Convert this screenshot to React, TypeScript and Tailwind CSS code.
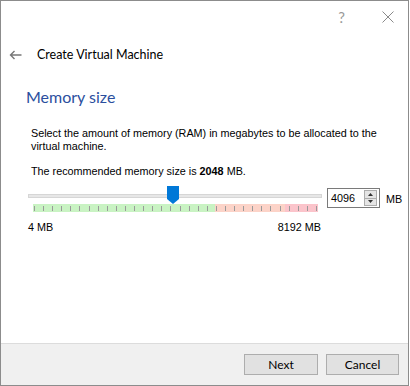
import React from "react";

const ticks = Array.from({ length: 32 }, (_, i) => i);

export default function App() {
  return (
    <div className="w-[410px] h-[386px] bg-white relative overflow-hidden" style={{ fontFamily: '"Liberation Sans", Arial, sans-serif' }}>
      <div className="w-[409px] h-[386px] border border-[#8c8c8c] flex flex-col bg-white">
        {/* title bar */}
        <div className="h-[30px] flex items-center justify-end pr-[14px] text-[#9a9a9a]">
          <span className="text-[15px] mr-[37px] mt-[2px]" style={{ fontFamily: '"Lato", sans-serif' }}>?</span>
          <svg width="12" height="12" viewBox="0 0 12 12" className="mt-[1px]">
            <path d="M0.5 0.5 L11.5 11.5 M11.5 0.5 L0.5 11.5" stroke="#8a8a8a" strokeWidth="1" fill="none" />
          </svg>
        </div>
        {/* header */}
        <div className="h-[46px] flex items-center pl-[8px] pt-[2px]">
          <svg width="13" height="10" viewBox="0 0 13 10">
            <path d="M12.5 5 H1.5 M5.5 1 L1.5 5 L5.5 9" stroke="#777" strokeWidth="1.4" fill="none" />
          </svg>
          <span className="ml-[15px] text-[12.5px] text-black" style={{ fontFamily: '"Lato", sans-serif' }}>Create Virtual Machine</span>
        </div>
        {/* heading */}
        <div className="pl-[25px] pt-[8px] h-[42px]">
          <span className="text-[16px] text-[#2b4f9e]" style={{ fontFamily: '"Lato", sans-serif' }}>Memory size</span>
        </div>
        {/* content */}
        <div className="pl-[30px] pr-[20px] pt-[8px] text-[10.8px] text-black leading-[13px]">
          <p>Select the amount of memory (RAM) in megabytes to be allocated to the virtual machine.</p>
          <p className="mt-[12px]">The recommended memory size is <b>2048</b> MB.</p>
        </div>
        {/* slider row */}
        <div className="flex items-start pl-[27px] mt-[8px]">
          <div className="w-[294px] flex flex-col">
            <div className="relative h-[26px]">
              <div className="absolute left-0 right-0 top-[8px] h-[4px] bg-[#e7e7e7] border border-[#d6d6d6]" />
              <svg className="absolute left-[139px] top-0" width="12" height="19" viewBox="0 0 12 19">
                <path d="M0 0 H12 V13 L6 18 L0 13 Z" fill="#0078d7" />
              </svg>
              <div className="absolute left-[5px] right-[4px] top-[18px] h-[8px] flex">
                <div className="w-[182px] bg-[#c9f3c3]" />
                <div className="w-[70px] bg-[#fcd3c8]" />
                <div className="flex-1 bg-[#fbc4cb]" />
              </div>
              <div className="absolute left-[5px] right-[4px] top-[20px] h-[5px] flex justify-between px-[1px]">
                {ticks.map((i) => (
                  <div key={i} className="w-px h-[5px] bg-[#9a9a9a]" />
                ))}
              </div>
            </div>
            <div className="flex justify-between text-[10.8px] mt-[7px] pr-[1px]">
              <span>4 MB</span>
              <span>8192 MB</span>
            </div>
          </div>
          <div className="ml-[5px] mt-[2px] w-[53px] h-[20px] border border-[#7a7a7a] flex items-center">
            <span className="pl-[3px] text-[10.8px] flex-1">4096</span>
            <div className="w-[13px] h-[16px] mr-[2px] flex flex-col border border-[#adadad] bg-[#e5e5e5]">
              <div className="flex-1 flex items-center justify-center border-b border-[#adadad]">
                <svg width="5" height="3" viewBox="0 0 5 3"><path d="M0 3 L2.5 0 L5 3 Z" fill="#333" /></svg>
              </div>
              <div className="flex-1 flex items-center justify-center">
                <svg width="5" height="3" viewBox="0 0 5 3"><path d="M0 0 L2.5 3 L5 0 Z" fill="#333" /></svg>
              </div>
            </div>
          </div>
          <span className="ml-[6px] mt-[5px] text-[10.8px]">MB</span>
        </div>
        <div className="flex-1" />
        {/* footer */}
        <div className="h-[42px] bg-[#f0f0f0] border-t border-[#dcdcdc] flex items-center justify-end pr-[9px] gap-[8px]">
          <button className="w-[74px] h-[21px] bg-[#e1e1e1] border border-[#adadad] text-[12px]" style={{ fontFamily: '"Lato", sans-serif' }}>Next</button>
          <button className="w-[73px] h-[21px] bg-[#e1e1e1] border border-[#adadad] text-[12px]" style={{ fontFamily: '"Lato", sans-serif' }}>Cancel</button>
        </div>
      </div>
    </div>
  );
}
